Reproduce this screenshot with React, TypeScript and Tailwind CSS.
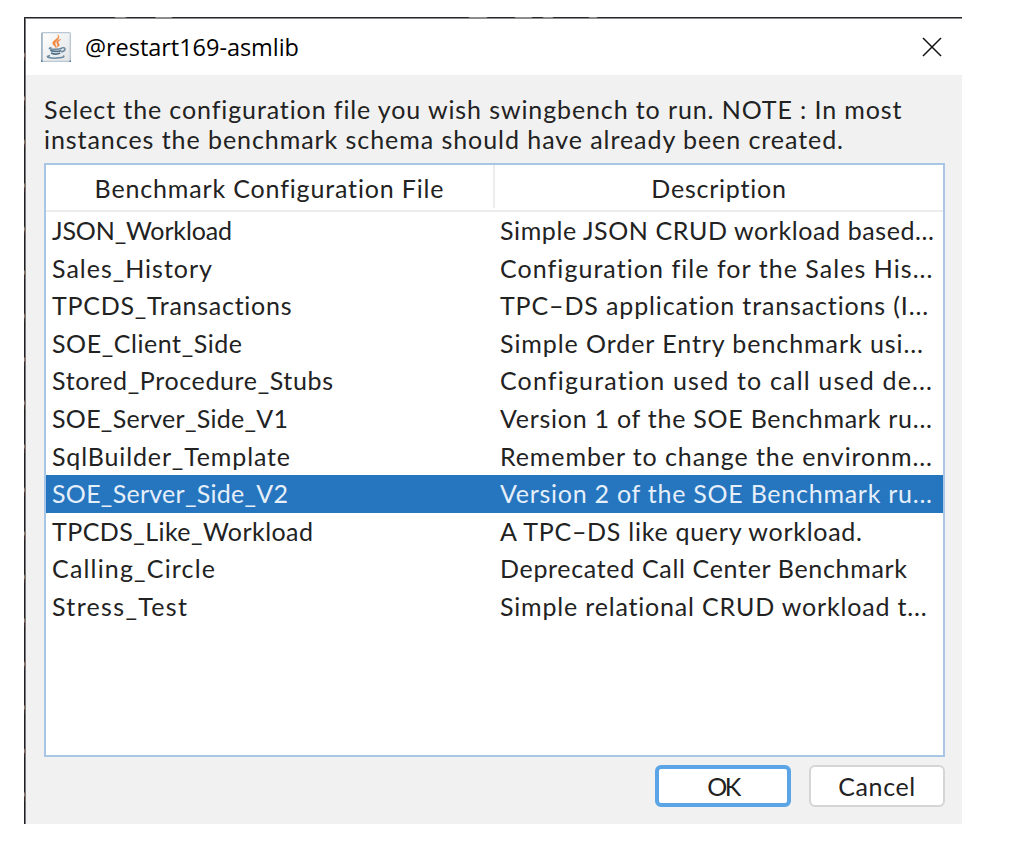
import { useLayoutEffect, useRef, useState } from 'react';

/** Text whose tracking is spread so that the line fills a given width. */
function Line({ text, width, className = '' }: { text: string; width: number; className?: string }) {
  const ref = useRef<HTMLSpanElement>(null);
  const [spacing, setSpacing] = useState(0);
  useLayoutEffect(() => {
    const el = ref.current;
    if (!el) return;
    el.style.letterSpacing = '0px';
    const natural = el.getBoundingClientRect().width;
    const next = (width - natural) / (text.length - 1);
    el.style.letterSpacing = `${next}px`;
    setSpacing(next);
  }, [text, width]);
  return (
    <span
      ref={ref}
      className={`inline-block self-start whitespace-pre ${className}`}
      style={{ letterSpacing: `${spacing}px` }}
    >
      {text}
    </span>
  );
}

type Row = { file: string; fileWidth: number; description: string; descriptionWidth: number };

const rows: Row[] = [
  { file: 'JSON_Workload', fileWidth: 180, description: 'Simple JSON CRUD workload based...', descriptionWidth: 434 },
  { file: 'Sales_History', fileWidth: 160, description: 'Configuration file for the Sales His...', descriptionWidth: 432 },
  { file: 'TPCDS_Transactions', fileWidth: 240, description: 'TPC–DS application transactions (I...', descriptionWidth: 429 },
  { file: 'SOE_Client_Side', fileWidth: 190, description: 'Simple Order Entry benchmark usi...', descriptionWidth: 423 },
  { file: 'Stored_Procedure_Stubs', fileWidth: 281, description: 'Configuration used to call used de...', descriptionWidth: 432 },
  { file: 'SOE_Server_Side_V1', fileWidth: 236, description: 'Version 1 of the SOE Benchmark ru...', descriptionWidth: 432 },
  { file: 'SqlBuilder_Template', fileWidth: 238, description: 'Remember to change the environm...', descriptionWidth: 432 },
  { file: 'SOE_Server_Side_V2', fileWidth: 236, description: 'Version 2 of the SOE Benchmark ru...', descriptionWidth: 432 },
  { file: 'TPCDS_Like_Workload', fileWidth: 261, description: 'A TPC–DS like query workload.', descriptionWidth: 362 },
  { file: 'Calling_Circle', fileWidth: 163, description: 'Deprecated Call Center Benchmark', descriptionWidth: 407 },
  { file: 'Stress_Test', fileWidth: 135, description: 'Simple relational CRUD workload t...', descriptionWidth: 427 },
];

function JavaIcon() {
  return (
    <svg viewBox="0 0 30 30" className="size-[30px] shrink-0" fill="none">
      <defs>
        <linearGradient id="tile" x1="0" y1="0" x2="1" y2="1">
          <stop offset="0" stopColor="#ffffff" />
          <stop offset="1" stopColor="#e2e3e5" />
        </linearGradient>
      </defs>
      <rect x="0.7" y="0.7" width="28.6" height="28.6" rx="1" fill="url(#tile)" stroke="#b9c8d4" strokeWidth="1.3" />
      <path d="M1 1v28" stroke="#95abbd" strokeWidth="1.3" />
      <path d="M0 29.2h1.5M28.5 29.2H30" stroke="#557089" strokeWidth="1.6" />
      <path
        d="M17 2.8c2.2 4.2-5.6 5-5.2 8.7.2 2 2.6 2.5 3.2 4.2.8-2.7-2.2-3.4-.4-5.6 1.5-1.9 4.7-3.6 2.4-7.3z"
        fill="#f08a43"
        stroke="#f08a43"
        strokeWidth=".6"
      />
      <path d="M20 7.3c-3.6 1.1-5 2.4-4 4.1.7 1.2 1 2-.2 3.8 3.4-1.5 2.6-2.8 1.7-3.9-.9-1.2.4-2.5 2.5-4z" fill="#ee8440" stroke="#ee8440" strokeWidth=".5" />
      <path d="M10.5 15.4c-3.8.9-2.8 1.9 4 1.8 3 0 5-.3 6.5-1" stroke="#6b8aa0" strokeWidth="1.5" />
      <path d="M9.3 18.2c2.8 1.5 8.2 1.5 11 .2M10 20.9c2.8 1.3 6.9 1.3 9.2.2" stroke="#4f7189" strokeWidth="1.7" />
      <path d="M20.8 15.8c4.6-1 4.2 3.2-.6 4.2" stroke="#6b8aa0" strokeWidth="1.5" />
      <path d="M9 23.4c-7 1.7 1.5 2.9 6.5 2.7 4.8-.2 9.3-1.1 6.7-2.5" stroke="#6b8aa0" strokeWidth="1.5" />
    </svg>
  );
}

export default function App() {
  return (
    <div className="h-[845px] w-[1011px] overflow-hidden bg-white pt-[17px] pl-6 font-['Lato',sans-serif] text-[25px] text-[#222222]">
      <div className="h-px w-[938px] bg-[linear-gradient(90deg,#25262a_90px,#8c8c8c_92px_101px,#25262a_103px_131px,#8c8c8c_132px_147px,#25262a_149px_444px,#8c8c8c_446px_462px,#25262a_464px_490px,#8c8c8c_492px_507px,#25262a_509px_518px,#8c8c8c_520px_528px,#25262a_530px_564px,#8c8c8c_566px_572px,#25262a_574px)]" />
      <div className="flex h-[806px] w-[938px]">
        <div className="w-px shrink-0 bg-[repeating-linear-gradient(180deg,#202024_0px_34px,#8d7568_36px_38px,#3a2a2c_40px_43.5px)]" />
        <div className="flex flex-1 flex-col border-t border-l border-t-[#8d8d90] border-l-[#77777a] bg-[#f1f1f1]">
          <header className="flex h-14 shrink-0 items-center bg-white pr-5 pl-[15px]">
            <JavaIcon />
            <h1 className="ml-[14px] font-['Open_Sans',sans-serif] text-[23.5px] leading-[30px] text-black">
              <Line text="@restart169-asmlib" width={214} />
            </h1>
            <button aria-label="Close" className="ml-auto">
              <svg viewBox="0 0 20 20" className="size-5" stroke="#111" strokeWidth="1.5">
                <path d="M1 1l18 18M19 1L1 19" />
              </svg>
            </button>
          </header>

          <main className="flex flex-1 flex-col pt-[19px] pr-[17px] pl-[18px]">
            <p className="flex h-[69px] shrink-0 flex-col leading-[30px]">
              <Line text="Select the configuration file you wish swingbench to run. NOTE : In most" width={857} />
              <Line text="instances the benchmark schema should have already been created." width={799} />
            </p>

            <section className="h-[594px] w-[901px] shrink-0 border-2 border-[#a9c6e6] bg-white">
              <div className="flex h-[47px] border-b-2 border-[#ececec] pb-[2px] leading-[46px]">
                <div className="w-[449px] border-r-2 border-[#ececec] text-center">
                  <Line text="Benchmark Configuration File" width={349} />
                </div>
                <div className="flex-1 text-center">
                  <Line text="Description" width={135} />
                </div>
              </div>
              {rows.map((row) => (
                <div
                  key={row.file}
                  className={`flex h-[37.6px] pl-[6px] leading-[36px] ${
                    row.file === 'SOE_Server_Side_V2' ? 'bg-[#2675bf] text-[#e5effa]' : ''
                  }`}
                >
                  <div className="w-[448px] shrink-0">
                    <Line text={row.file} width={row.fileWidth} />
                  </div>
                  <Line text={row.description} width={row.descriptionWidth} />
                </div>
              ))}
            </section>

            <div className="mt-2 flex justify-end gap-[18px]">
              <button className="h-[42px] w-[136px] rounded-[6px] border-4 border-[#5ba5e6] bg-white leading-[34px]">
                <Line text="OK" width={34} />
              </button>
              <button className="h-[42px] w-[136px] rounded-[6px] border-2 border-[#d5d5d5] bg-white leading-[38px]">
                <Line text="Cancel" width={77} />
              </button>
            </div>
          </main>
        </div>
      </div>
    </div>
  );
}
